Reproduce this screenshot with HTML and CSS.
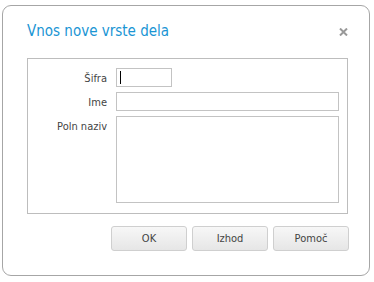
FILE: index.html
```html
<!DOCTYPE html>
<html>
<head>
<meta charset="utf-8">
<link rel="stylesheet" href="styles.css">
</head>
<body>
<div class="dialog">
  <div class="header">
    <div class="title">Vnos nove vrste dela</div>
    <div class="close">
      <svg width="9" height="8" viewBox="0 0 9 8"><path d="M1 0.5 L8 7.5 M8 0.5 L1 7.5" stroke="#999" stroke-width="2"/></svg>
    </div>
  </div>
  <div class="panel">
    <div class="row">
      <label class="lbl">Šifra</label>
      <div class="input short focused"><span class="caret"></span></div>
    </div>
    <div class="row">
      <label class="lbl">Ime</label>
      <div class="input wide"></div>
    </div>
    <div class="row">
      <label class="lbl">Poln naziv</label>
      <div class="input area"></div>
    </div>
  </div>
  <div class="buttons">
    <button class="btn">OK</button>
    <button class="btn">Izhod</button>
    <button class="btn">Pomoč</button>
  </div>
</div>
</body>
</html>
```
FILE: styles.css
```css
html, body { margin: 0; padding: 0; background: #fff; }
body { font-family: "DejaVu Sans Condensed", "DejaVu Sans", Tahoma, sans-serif; font-size: 11px; color: #222; }
.dialog {
  box-sizing: border-box;
  margin: 5px 0 0 2px;
  width: 368px;
  height: 271px;
  border: 1px solid #a6a6a6;
  border-radius: 9px;
  padding: 0 0 0 24px;
  display: flex;
  flex-direction: column;
}
.header {
  height: 52px;
  display: flex;
  align-items: flex-start;
  justify-content: space-between;
  padding-right: 21px;
}
.title {
  margin-top: 16px;
  font-family: "DejaVu Sans Condensed", "DejaVu Sans", sans-serif;
  font-size: 15px;
  color: #1a95d4;
}
.close { margin-top: 22px; display: flex; }
.panel {
  box-sizing: border-box;
  width: 321px;
  height: 156px;
  border: 1px solid #bdbdbd;
  padding: 9px 7px 0 0;
  display: flex;
  flex-direction: column;
  gap: 5px;
}
.row { display: flex; align-items: flex-start; }
.lbl {
  width: 79px;
  text-align: right;
  padding-right: 9px;
  line-height: 13px;
  margin-top: 4px;
  color: #444;
}
.input {
  box-sizing: border-box;
  border: 1px solid #c3c3c3;
  background: #fff;
  height: 19px;
  position: relative;
}
.short { width: 56px; }
.wide { width: 223px; }
.area { width: 223px; height: 87px; }
.caret {
  position: absolute;
  left: 3px;
  top: 2px;
  width: 1px;
  height: 13px;
  background: #000;
}
.buttons {
  display: flex;
  justify-content: flex-end;
  gap: 5px;
  margin-top: 12px;
  padding-right: 20px;
}
.btn {
  box-sizing: border-box;
  width: 76px;
  height: 25px;
  border: 1px solid #cfcfcf;
  border-radius: 3px;
  background: linear-gradient(#f7f7f7, #e6e6e6);
  font-family: "DejaVu Sans Condensed", "DejaVu Sans", Tahoma, sans-serif;
  font-size: 11px;
  color: #444;
  padding: 0;
}
```
